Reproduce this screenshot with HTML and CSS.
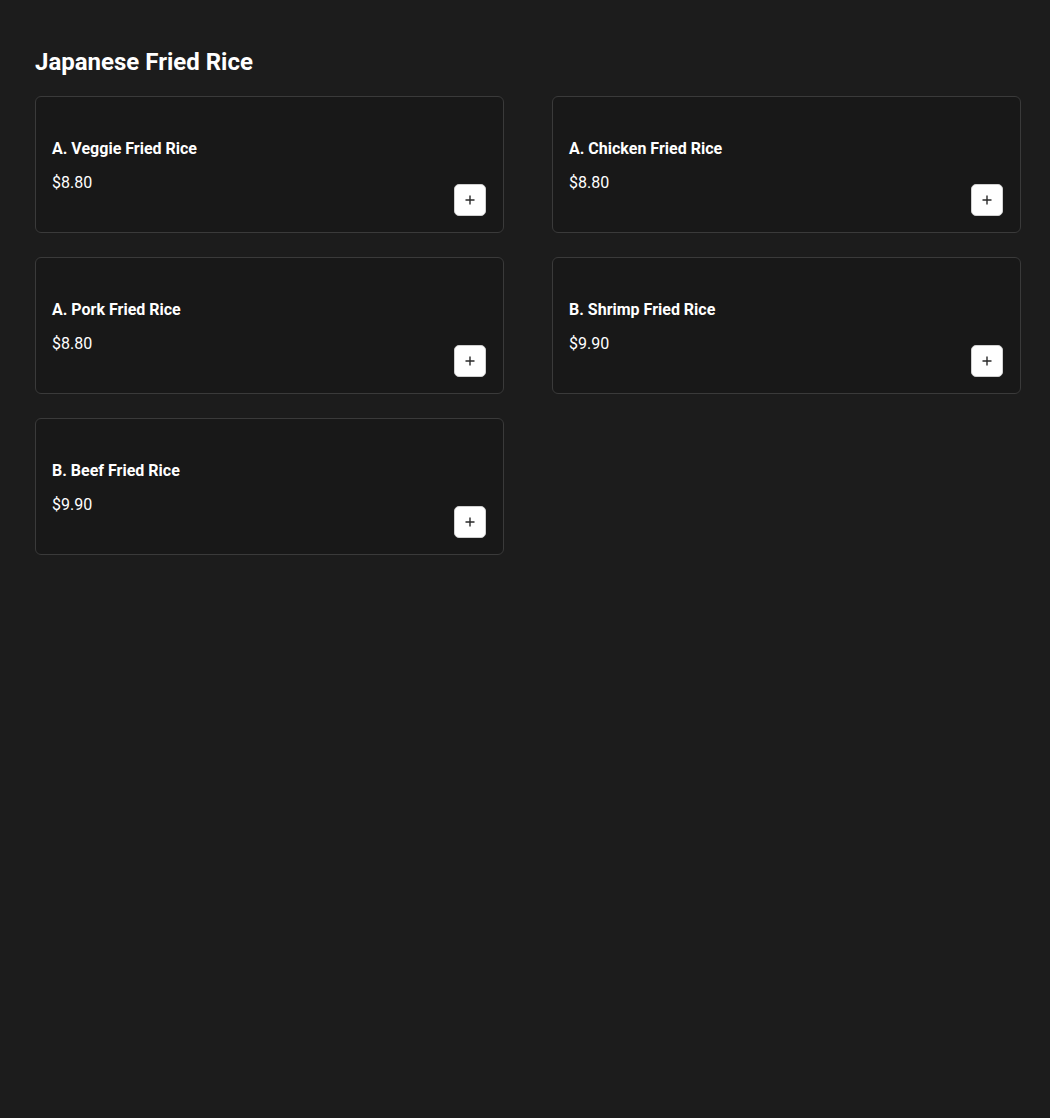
FILE: index.html
```html
<!DOCTYPE html>
<html lang="en">
<head>
<meta charset="utf-8">
<title>Japanese Fried Rice</title>
<link rel="stylesheet" href="styles.css">
</head>
<body>
<main class="page">
  <h1 class="section-title">Japanese Fried Rice</h1>
  <div class="menu-grid">
    <div class="item-card">
      <div class="item-info">
        <div class="item-name">A. Veggie Fried Rice</div>
        <div class="item-price">$8.80</div>
      </div>
      <button class="add-btn" aria-label="Add"><svg viewBox="0 0 12 12" width="12" height="12"><path d="M6 1.5v9M1.5 6h9" stroke="#2a2a2a" stroke-width="1.4" fill="none"/></svg></button>
    </div>
    <div class="item-card">
      <div class="item-info">
        <div class="item-name">A. Chicken Fried Rice</div>
        <div class="item-price">$8.80</div>
      </div>
      <button class="add-btn" aria-label="Add"><svg viewBox="0 0 12 12" width="12" height="12"><path d="M6 1.5v9M1.5 6h9" stroke="#2a2a2a" stroke-width="1.4" fill="none"/></svg></button>
    </div>
    <div class="item-card">
      <div class="item-info">
        <div class="item-name">A. Pork Fried Rice</div>
        <div class="item-price">$8.80</div>
      </div>
      <button class="add-btn" aria-label="Add"><svg viewBox="0 0 12 12" width="12" height="12"><path d="M6 1.5v9M1.5 6h9" stroke="#2a2a2a" stroke-width="1.4" fill="none"/></svg></button>
    </div>
    <div class="item-card">
      <div class="item-info">
        <div class="item-name">B. Shrimp Fried Rice</div>
        <div class="item-price">$9.90</div>
      </div>
      <button class="add-btn" aria-label="Add"><svg viewBox="0 0 12 12" width="12" height="12"><path d="M6 1.5v9M1.5 6h9" stroke="#2a2a2a" stroke-width="1.4" fill="none"/></svg></button>
    </div>
    <div class="item-card">
      <div class="item-info">
        <div class="item-name">B. Beef Fried Rice</div>
        <div class="item-price">$9.90</div>
      </div>
      <button class="add-btn" aria-label="Add"><svg viewBox="0 0 12 12" width="12" height="12"><path d="M6 1.5v9M1.5 6h9" stroke="#2a2a2a" stroke-width="1.4" fill="none"/></svg></button>
    </div>
  </div>
</main>
</body>
</html>
```
FILE: styles.css
```css
* { box-sizing: border-box; }
html, body {
  margin: 0;
  padding: 0;
  background: #1c1c1c;
  color: #ffffff;
  font-family: Roboto, "Liberation Sans", Arial, sans-serif;
}
.page {
  padding: 48px 29px 40px 35px;
}
.section-title {
  margin: 0 0 20px 0;
  font-size: 24px;
  font-weight: 700;
  line-height: 28px;
  color: #ffffff;
}
.menu-grid {
  display: grid;
  grid-template-columns: 469px 469px;
  column-gap: 48px;
  row-gap: 24px;
}
.item-card {
  display: flex;
  justify-content: space-between;
  height: 137px;
  padding: 16px 17px 16px 16px;
  background: #181818;
  border: 1px solid #3a3a3a;
  border-radius: 6px;
}
.item-info {
  display: flex;
  flex-direction: column;
  justify-content: center;
  gap: 15px;
  padding-top: 2px;
}
.item-name {
  font-size: 16px;
  font-weight: 700;
  line-height: 19px;
}
.item-price {
  font-size: 16px;
  font-weight: 400;
  line-height: 19px;
}
.add-btn {
  align-self: flex-end;
  width: 32px;
  height: 32px;
  padding: 0;
  border: 1px solid #d0d0d0;
  border-radius: 5px;
  background: #ffffff;
  display: flex;
  align-items: center;
  justify-content: center;
  cursor: pointer;
}
.add-btn svg { display: block; }
```
